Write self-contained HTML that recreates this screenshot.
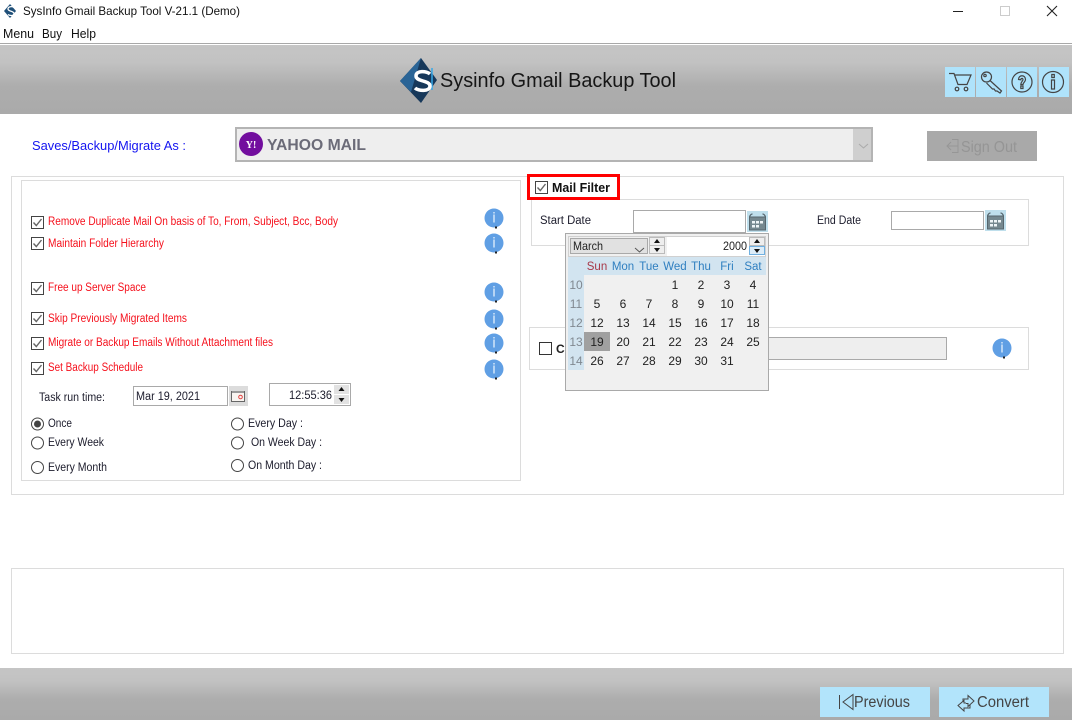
<!DOCTYPE html>
<html><head><meta charset="utf-8"><style>
html,body{margin:0;padding:0;background:#fff;width:1072px;height:720px;overflow:hidden}
svg{display:block;position:absolute;left:0;top:0}
text{font-family:"Liberation Sans",sans-serif;white-space:pre}
.r{font-size:11.5px;fill:#f5101c}
.d{font-size:11.5px;fill:#1c1c2c}
.m{font-size:12.5px;fill:#111}
.n{font-size:12px;fill:#222;text-anchor:middle}
.w{font-size:12px;fill:#808890;text-anchor:middle}
.h{font-size:11.5px;fill:#2f7fc0;text-anchor:middle}
</style></head><body>
<svg width="1072" height="720" viewBox="0 0 1072 720" xmlns="http://www.w3.org/2000/svg">
<defs>
<linearGradient id="g" x1="0" y1="0" x2="0" y2="1"><stop offset="0" stop-color="#c5c5c5"/><stop offset=".25" stop-color="#c2c2c2"/><stop offset=".6" stop-color="#adadad"/><stop offset="1" stop-color="#aaa"/></linearGradient>
<g id="cb"><rect x=".5" y=".5" width="12" height="12" fill="#fff" stroke="#444"/><path d="M2.5 6.5l2.8 3L10.5 3" fill="none" stroke="#666" stroke-width="1.4"/></g>
<g id="info"><circle r="9.5" fill="#609fe4"/><rect x="-.7" y="-3.5" width="1.4" height="8" fill="#dcebfa"/><rect x="-.7" y="-6" width="1.4" height="1.5" fill="#dcebfa"/><rect x="1" y="8.5" width="2" height="2" fill="#222"/></g>
<g id="rad"><circle r="6" fill="#fff" stroke="#444"/></g>
<g id="cal"><rect x="0" y="0" width="21" height="21" fill="#bfdfec"/><path d="M2.5 6h16v13h-16z" fill="#75888f" stroke="#56666e"/><path d="M2.5 6q1-3 3-3M18.500 6q-1-3-3-3" fill="none" stroke="#56666e" stroke-width="1.2"/><path d="M5 10h3v2.500H5zM9 10h3v2.500H9zM13 10h3v2.500h-3zM5 14h3v2.500H5zM9 14h3v2.500H9z" fill="#eef4f6"/></g>
</defs>
<!-- title bar -->
<path d="M10 4L4 11l6 7 6-7z" fill="#1f4f78"/><path d="M14 7.500c-2-1.500-6-1-6 1.500s6 2 6 4.500-4 2.500-6 1" fill="none" stroke="#fff" stroke-width="1.300"/>
<text x="23" y="15" font-size="12" fill="#111" textLength="217" lengthAdjust="spacingAndGlyphs">SysInfo Gmail Backup Tool V-21.1 (Demo)</text>
<rect x="953" y="11" width="10" height="1" fill="#222"/>
<rect x="1000.500" y="6.500" width="9" height="9" fill="none" stroke="#ccc"/>
<path d="M1047 6l10 10M1057 6l-10 10" stroke="#222" stroke-width="1.100"/>
<text class="m" x="3" y="38" textLength="31" lengthAdjust="spacingAndGlyphs">Menu</text>
<text class="m" x="42" y="38" textLength="20" lengthAdjust="spacingAndGlyphs">Buy</text>
<text class="m" x="71" y="38" textLength="25" lengthAdjust="spacingAndGlyphs">Help</text>
<rect x="0" y="43" width="1072" height="1" fill="#a8a8a8"/>
<!-- header -->
<rect x="0" y="45" width="1072" height="69" fill="url(#g)"/>
<path d="M421 58L400 81l21 22 16-23z" fill="#17385a"/><path d="M421 58L400 81l11 11 10-34z" fill="#2a6496"/>
<path d="M432 68v22" stroke="#35a8e8" stroke-width="1.500"/>
<path d="M430 74c-3-3-14-4-14 2 0 6 14 4 14 10 0 6-12 5-15 2" fill="none" stroke="#fff" stroke-width="3.500"/>
<text x="440" y="87" font-size="20" fill="#161616" textLength="236" lengthAdjust="spacingAndGlyphs">Sysinfo Gmail Backup Tool</text>
<!-- top buttons -->
<rect x="945" y="67" width="30" height="30" fill="#afe3fb"/>
<rect x="976" y="67" width="30" height="30" fill="#afe3fb"/>
<rect x="1007" y="67" width="30" height="30" fill="#afe3fb"/>
<rect x="1039" y="67" width="30" height="30" fill="#afe3fb"/>
<g fill="none" stroke="#444" stroke-width="1.200">
<path d="M949 73.500h5l4 11h9l4-9.500h-16"/><circle cx="957" cy="89" r="1.800"/><circle cx="966" cy="89" r="1.800"/>
<circle cx="986.500" cy="77" r="5"/><circle cx="985" cy="75.500" r="1.200"/><path d="M990 80.500l11.500 10.500-1.500 2-3-2-1.500 0-1.500-2-1.500 0-6-6"/>
<circle cx="1022" cy="82" r="10"/><path d="M1018.500 79.500c0-5 7-5 7 0 0 2.500-2.500 3-2.500 5h-2.200c0-2.800 2.200-3.200 2.200-5 0-1.500-2.200-1.500-2.200 .3zM1020.800 86h2.200v2.500h-2.200z"/>
<circle cx="1053" cy="82" r="10.500"/><path d="M1051.500 80h3v9h-3zM1051.800 74.500h2.500v3h-2.500z"/>
</g>
<!-- saves row -->
<text x="32" y="150" font-size="13" fill="#1414f0" textLength="154" lengthAdjust="spacingAndGlyphs">Saves/Backup/Migrate As :</text>
<rect x="236" y="128" width="636" height="33" fill="#cfcfcf" stroke="#b4b4b4" stroke-width="2"/>
<rect x="237" y="129" width="616" height="31" fill="#eee"/>
<path d="M859 144l4.500 4 4.500-4" fill="none" stroke="#aaa"/>
<circle cx="251" cy="144" r="12" fill="#720e9e"/>
<text x="251" y="148" font-size="10" font-weight="bold" fill="#fff" text-anchor="middle" style="font-family:'Liberation Serif',serif">Y!</text>
<text x="267" y="150" font-size="16" font-weight="bold" fill="#6b6b78" textLength="99" lengthAdjust="spacingAndGlyphs">YAHOO MAIL</text>
<rect x="927" y="131" width="110" height="30" fill="#a9a9a9"/>
<path d="M958 146h-11M951 142l-4 4 4 4M952 139.500h6v13h-6" fill="none" stroke="#969696"/>
<text x="961" y="152" font-size="15.500" fill="#959595" textLength="56" lengthAdjust="spacingAndGlyphs">Sign Out</text>
<!-- main panels -->
<rect x="11.500" y="176.500" width="1052" height="318" fill="none" stroke="#dcdcdc"/>
<rect x="21.500" y="180.500" width="499" height="300" fill="#fff" stroke="#dcdcdc"/>
<rect x="531.500" y="199.500" width="497" height="46" fill="#fff" stroke="#dcdcdc"/>
<rect x="529.500" y="327.500" width="499" height="42" fill="#fff" stroke="#dcdcdc"/>
<!-- left checks -->
<use href="#cb" x="31" y="216"/><text class="r" x="48" y="225" textLength="290" lengthAdjust="spacingAndGlyphs">Remove Duplicate Mail On basis of To, From, Subject, Bcc, Body</text>
<use href="#cb" x="31" y="237"/><text class="r" x="48" y="247" textLength="116" lengthAdjust="spacingAndGlyphs">Maintain Folder Hierarchy</text>
<use href="#cb" x="31" y="282"/><text class="r" x="48" y="291" textLength="98" lengthAdjust="spacingAndGlyphs">Free up Server Space</text>
<use href="#cb" x="31" y="312"/><text class="r" x="48" y="322" textLength="139" lengthAdjust="spacingAndGlyphs">Skip Previously Migrated Items</text>
<use href="#cb" x="31" y="337"/><text class="r" x="48" y="346" textLength="225" lengthAdjust="spacingAndGlyphs">Migrate or Backup Emails Without Attachment files</text>
<use href="#cb" x="31" y="362"/><text class="r" x="48" y="371" textLength="95" lengthAdjust="spacingAndGlyphs">Set Backup Schedule</text>
<use href="#info" x="494" y="218"/><use href="#info" x="494" y="243"/><use href="#info" x="494" y="292"/><use href="#info" x="494" y="319"/><use href="#info" x="494" y="343"/><use href="#info" x="494" y="369"/>
<!-- task run -->
<text class="d" x="39" y="401" textLength="66" lengthAdjust="spacingAndGlyphs">Task run time:</text>
<rect x="133.500" y="386.500" width="94" height="19" fill="#fff" stroke="#a9a9a9"/>
<text class="d" x="136" y="400" textLength="64" lengthAdjust="spacingAndGlyphs">Mar 19, 2021</text>
<rect x="229" y="386" width="19" height="20" fill="#dcdcdc"/>
<rect x="231.500" y="391.500" width="13" height="10" fill="#f8f4f0" stroke="#666"/><circle cx="240.500" cy="397" r="1.800" fill="none" stroke="#e04040"/><rect x="232" y="391" width="12" height="2" fill="#999"/>
<rect x="269.500" y="383.500" width="81" height="22" fill="#fff" stroke="#a9a9a9"/>
<text class="d" x="289" y="399" textLength="43" lengthAdjust="spacingAndGlyphs">12:55:36</text>
<rect x="334" y="385" width="15" height="9" fill="#e2e2e2"/><rect x="334" y="395" width="15" height="9" fill="#e2e2e2"/>
<path d="M341.500 387l-3 4h6zM338.500 398h6l-3 4z" fill="#111"/>
<!-- radios -->
<use href="#rad" x="37.500" y="424"/><circle cx="37.500" cy="424" r="3.500" fill="#444"/>
<use href="#rad" x="37.500" y="443"/><use href="#rad" x="37.500" y="467.500"/>
<use href="#rad" x="237.500" y="424"/><use href="#rad" x="237.500" y="443"/><use href="#rad" x="237.500" y="465.500"/>
<text class="d" x="48" y="427" textLength="24" lengthAdjust="spacingAndGlyphs">Once</text>
<text class="d" x="48" y="446" textLength="56" lengthAdjust="spacingAndGlyphs">Every Week</text>
<text class="d" x="48" y="471" textLength="59" lengthAdjust="spacingAndGlyphs">Every Month</text>
<text class="d" x="248" y="427" textLength="55" lengthAdjust="spacingAndGlyphs">Every Day :</text>
<text class="d" x="251" y="446" textLength="71" lengthAdjust="spacingAndGlyphs">On Week Day :</text>
<text class="d" x="248" y="469" textLength="74" lengthAdjust="spacingAndGlyphs">On Month Day :</text>
<!-- mail filter -->
<rect x="528.500" y="175.500" width="90" height="23" fill="#fff" stroke="#f00" stroke-width="3"/>
<use href="#cb" x="535" y="181"/>
<text x="552" y="192" font-size="12.500" font-weight="bold" fill="#111" textLength="58" lengthAdjust="spacingAndGlyphs">Mail Filter</text>
<text class="d" x="540" y="224" textLength="51" lengthAdjust="spacingAndGlyphs">Start Date</text>
<rect x="633.500" y="210.500" width="112" height="22" fill="#fff" stroke="#a9a9a9"/>
<use href="#cal" x="747" y="211"/>
<text class="d" x="817" y="224" textLength="44" lengthAdjust="spacingAndGlyphs">End Date</text>
<rect x="891.500" y="211.500" width="92" height="18" fill="#fff" stroke="#a9a9a9"/>
<use href="#cal" x="985" y="210"/>
<!-- custom row -->
<rect x="539.500" y="342.500" width="12" height="12" fill="#fff" stroke="#333"/>
<text x="556" y="353" font-size="12" font-weight="bold" fill="#222">Cu</text>
<rect x="700.500" y="337.500" width="246" height="22" fill="#eee" stroke="#a9a9a9"/>
<use href="#info" x="1002" y="348"/>
<!-- calendar popup -->
<rect x="565.500" y="233.500" width="203" height="157" fill="#f0f0f0" stroke="#a9a9a9"/>
<rect x="568.500" y="236.500" width="197" height="20" fill="#f0f0f0" stroke="#d0d0d0"/>
<rect x="570.500" y="238.500" width="77" height="15" fill="#e1e1e1" stroke="#a9a9a9"/>
<text x="573" y="250" font-size="12" fill="#222" textLength="30" lengthAdjust="spacingAndGlyphs">March</text>
<path d="M635 248l4.500 4 4.500-4" fill="none" stroke="#555"/>
<rect x="649.500" y="237.500" width="15" height="8" fill="#eee" stroke="#bbb"/><rect x="649.500" y="245.500" width="15" height="8" fill="#eee" stroke="#bbb"/>
<path d="M657 239l-3 4h6zM654 248h6l-3 4z" fill="#111"/>
<rect x="667" y="237" width="98" height="19" fill="#fff"/>
<text x="723" y="250" font-size="12" fill="#222" textLength="24" lengthAdjust="spacingAndGlyphs">2000</text>
<rect x="749.500" y="237.500" width="15" height="8" fill="#eee" stroke="#bbb"/><rect x="749.500" y="246.500" width="15" height="8" fill="#dcecf8" stroke="#70b0e0"/>
<path d="M757 239l-3 4h6zM754 249h6l-3 4z" fill="#111"/>
<rect x="568" y="257" width="198" height="18" fill="#d2e4f0"/>
<rect x="568" y="275" width="16" height="95" fill="#d2e4f0"/>
<rect x="584" y="332" width="26" height="19" fill="#a0a0a0"/>
<g>
<text class="h" x="597" y="270" style="fill:#a83848">Sun</text><text class="h" x="623" y="270">Mon</text><text class="h" x="649" y="270">Tue</text><text class="h" x="675" y="270">Wed</text><text class="h" x="701" y="270">Thu</text><text class="h" x="727" y="270">Fri</text><text class="h" x="753" y="270">Sat</text>
<text class="w" x="576" y="289">10</text><text class="w" x="576" y="308">11</text><text class="w" x="576" y="327">12</text><text class="w" x="576" y="346">13</text><text class="w" x="576" y="365">14</text>
<text class="n" x="675" y="289">1</text><text class="n" x="701" y="289">2</text><text class="n" x="727" y="289">3</text><text class="n" x="753" y="289">4</text>
<text class="n" x="597" y="308">5</text><text class="n" x="623" y="308">6</text><text class="n" x="649" y="308">7</text><text class="n" x="675" y="308">8</text><text class="n" x="701" y="308">9</text><text class="n" x="727" y="308">10</text><text class="n" x="753" y="308">11</text>
<text class="n" x="597" y="327">12</text><text class="n" x="623" y="327">13</text><text class="n" x="649" y="327">14</text><text class="n" x="675" y="327">15</text><text class="n" x="701" y="327">16</text><text class="n" x="727" y="327">17</text><text class="n" x="753" y="327">18</text>
<text class="n" x="597" y="346">19</text><text class="n" x="623" y="346">20</text><text class="n" x="649" y="346">21</text><text class="n" x="675" y="346">22</text><text class="n" x="701" y="346">23</text><text class="n" x="727" y="346">24</text><text class="n" x="753" y="346">25</text>
<text class="n" x="597" y="365">26</text><text class="n" x="623" y="365">27</text><text class="n" x="649" y="365">28</text><text class="n" x="675" y="365">29</text><text class="n" x="701" y="365">30</text><text class="n" x="727" y="365">31</text>
</g>
<!-- status box -->
<rect x="11.500" y="568.500" width="1052" height="85" fill="#fff" stroke="#dcdcdc"/>
<!-- footer -->
<rect x="0" y="668" width="1072" height="52" fill="url(#g)"/>
<rect x="820" y="687" width="110" height="30" fill="#b2e4fb"/>
<rect x="939" y="687" width="110" height="30" fill="#b2e4fb"/>
<path d="M839.500 695v14M853 694.500l-10 7.500 10 7.500z" fill="none" stroke="#444"/>
<text x="854" y="707" font-size="15.500" fill="#444" textLength="56" lengthAdjust="spacingAndGlyphs">Previous</text>
<path d="M963 702v-3h5v-3.500l6 5.500-6 5.500v-3h-2M966 703h-2v-3M964 703v-2.500l-6 5 6 5.500v-3h6v-3" fill="none" stroke="#444"/>
<text x="977" y="707" font-size="15.500" fill="#444" textLength="52" lengthAdjust="spacingAndGlyphs">Convert</text>
</svg>
</body></html>
